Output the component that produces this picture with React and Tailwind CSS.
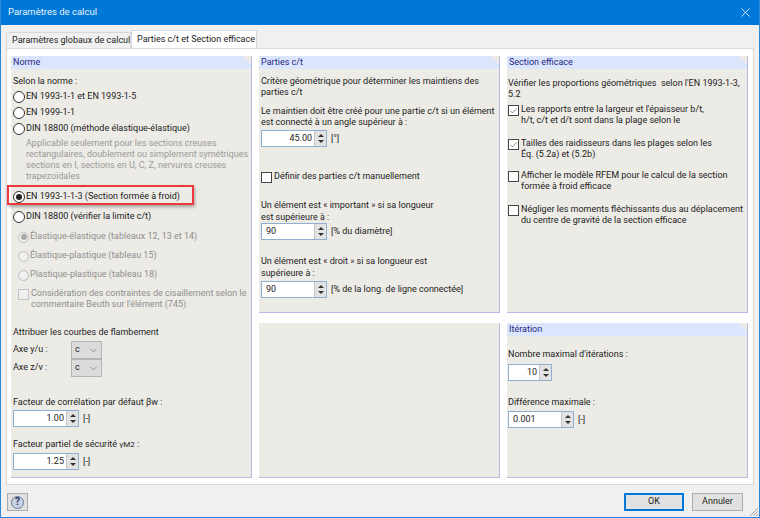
import { X, Check, ChevronDown } from 'lucide-react';

function Panel({ title, className = '', children }) {
  return (
    <div className={`relative bg-[#ecebe6] border-r border-b border-[#b9bbe6] ${className}`}>
      {title && (
        <div className="relative h-[13px] bg-[#dbe5fb] pl-[2px] text-[#25258a] leading-[13px] [clip-path:polygon(0_0,calc(100%-8px)_0,100%_8px,100%_100%,0_100%)]">
          {title}
        </div>
      )}
      {children}
    </div>
  );
}

function Radio({ label, checked, disabled, className = '' }) {
  return (
    <div className={`flex items-center h-[14px] ${disabled ? 'pl-[5px] text-[#8f8f8f]' : ''} ${className}`}>
      <span className={`flex items-center justify-center shrink-0 rounded-full border ${disabled ? 'w-[11px] h-[11px] bg-[#f0f0f0] border-[#bdbdbd]' : 'w-[12px] h-[12px] bg-white border-[#333333]'} mr-[1px]`}>
        {checked && <span className={`rounded-full w-[6px] h-[6px] ${disabled ? 'bg-[#a8a8a8]' : 'bg-[#222222]'}`} />}
      </span>
      <span className="whitespace-nowrap">{label}</span>
    </div>
  );
}

function CheckBox({ checked, disabled, lines, className = '' }) {
  return (
    <div className={`flex items-start ${className}`}>
      <span className={`flex items-center justify-center shrink-0 w-[11px] h-[11px] mt-[1px] mr-[2px] border ${disabled ? 'border-[#c4c4c4] bg-[#f0f0f0]' : 'border-[#444444] bg-white'}`}>
        {checked && <Check size={10} strokeWidth={1.5} className="text-[#333333]" />}
      </span>
      <div className={`leading-[11px] ${disabled ? 'text-[#8f8f8f]' : ''}`}>
        {lines.map((line) => (
          <div key={line} className="whitespace-nowrap">{line}</div>
        ))}
      </div>
    </div>
  );
}

function Spinner({ value, unit, width = 'w-[66px]', left, className = '' }) {
  return (
    <div className={`flex items-center h-[17px] ${className}`}>
      <div className={`flex h-full bg-white border border-[#8fb0d0] ${width}`}>
        <span className={`flex-1 leading-[15px] ${left ? 'pl-[4px] text-left' : 'pr-[2px] text-right'}`}>{value}</span>
        <span className="flex flex-col items-center justify-center gap-[3px] w-[12px] bg-[#e3e3e3] border-l border-[#c4c4c4]">
          <span className="w-0 h-0 border-x-[3px] border-x-transparent border-b-[3px] border-b-[#333333]" />
          <span className="w-0 h-0 border-x-[3px] border-x-transparent border-t-[3px] border-t-[#333333]" />
        </span>
      </div>
      {unit && <span className="ml-[4px] whitespace-nowrap">{unit}</span>}
    </div>
  );
}

function Select({ value }) {
  return (
    <div className="flex items-center justify-between w-[31px] h-[18px] bg-[#dcdcdc] border border-[#b4b4b4] pl-[3px] pr-[2px]">
      <span>{value}</span>
      <ChevronDown size={11} strokeWidth={1.25} className="text-[#555555]" />
    </div>
  );
}

export default function App() {
  return (
    <div className="w-[760px] h-[518px] flex flex-col overflow-hidden bg-[#f0f0f0] border-x border-b border-[#2b88d8] text-[9px] text-[#1c1c1c] font-['Roboto',sans-serif]">
      <div className="flex items-center justify-between h-[25px] -mx-px bg-[#0078d7] pl-[8px] pr-[7px] text-[9.5px] text-[#e6f1fb] shrink-0">
        <span>Paramètres de calcul</span>
        <X size={15} strokeWidth={1.25} className="text-white" />
      </div>

      <div className="flex items-end h-[23px] pl-[5px] shrink-0">
        <div className="flex items-center h-[16px] w-[125px] bg-[#f0f0f0] border border-b-0 border-[#d9d9d9] pl-[5px] whitespace-nowrap">
          Paramètres globaux de calcul
        </div>
        <div className="flex items-center h-[18px] w-[126px] bg-white border border-b-0 border-[#d9d9d9] pl-[5px] whitespace-nowrap">
          Parties c/t et Section efficace
        </div>
      </div>

      <div className="grid grid-cols-[241px_241px_241px] grid-rows-[257px_155px] gap-x-[7px] gap-y-[10px] h-[437px] mx-[5px] px-[4px] pt-[7px] bg-white border border-[#d9d9d9] shrink-0">
        <Panel title="Norme" className="row-span-2">
          <div className="px-[2px] pt-[5px]">
            <div className="h-[14px] leading-[14px]">Selon la norme :</div>
            <Radio label="EN 1993-1-1 et EN 1993-1-5" className="mt-[2px]" />
            <Radio label="EN 1999-1-1" className="mt-[2px]" />
            <Radio label="DIN 18800 (méthode élastique-élastique)" className="mt-[2px]" />
            <div className="pl-[13px] mt-[2px] leading-[11px] text-[#9a9a9a]">
              <div className="whitespace-nowrap">Applicable seulement pour les sections creuses</div>
              <div className="whitespace-nowrap">rectangulaires, doublement ou simplement symétriques</div>
              <div className="whitespace-nowrap">sections en I, sections en U, C, Z, nervures creuses</div>
              <div className="whitespace-nowrap">trapezoïdales</div>
            </div>
            <div className="relative mt-[8px]">
              <Radio label="EN 1993-1-1-3 (Section formée à froid)" checked />
              <div className="absolute -left-[6px] -top-[5px] w-[187px] h-[20px] border-2 border-[#f0393f] shadow-[1px_2px_3px_rgba(0,0,0,0.3)]" />
            </div>
            <Radio label="DIN 18800 (vérifier la limite c/t)" className="mt-[6px]" />
            <Radio label="Élastique-élastique (tableaux 12, 13 et 14)" checked disabled className="mt-[6px]" />
            <Radio label="Élastique-plastique (tableau 15)" disabled className="mt-[5px]" />
            <Radio label="Plastique-plastique (tableau 18)" disabled className="mt-[5px]" />
            <div className="pl-[5px] mt-[6px]">
              <CheckBox disabled lines={['Considération des contraintes de cisaillement selon le', "commentaire Beuth sur l'élément (745)"]} />
            </div>
            <div className="mt-[15px] h-[14px] leading-[14px]">Attribuer les courbes de flambement</div>
            <div className="flex items-center mt-[2px]">
              <span className="w-[58px]">Axe y/u :</span>
              <Select value="c" />
            </div>
            <div className="flex items-center">
              <span className="w-[58px]">Axe z/v :</span>
              <Select value="c" />
            </div>
            <div className="mt-[18px] h-[14px] leading-[14px]">Facteur de corrélation par défaut βw :</div>
            <Spinner value="1.00" unit="[-]" className="mt-[1px]" />
            <div className="mt-[10px] h-[14px] leading-[14px]">Facteur partiel de sécurité <span className="text-[8px]">γM2</span> :</div>
            <Spinner value="1.25" unit="[-]" className="mt-[2px]" />
          </div>
        </Panel>

        <Panel title="Parties c/t">
          <div className="px-[2px] pt-[7px] leading-[11px] whitespace-nowrap">
            <div>Critère géométrique pour déterminer les maintiens des</div>
            <div>parties c/t</div>
            <div className="mt-[8px]">Le maintien doit être créé pour une partie c/t si un élément</div>
            <div>est connecté à un angle supérieur à :</div>
            <Spinner value="45.00" unit="[°]" className="mt-[2px]" />
            <CheckBox lines={['Définir des parties c/t manuellement']} className="mt-[24px]" />
            <div className="mt-[17px]">Un élément est « important » si sa longueur</div>
            <div className="mt-[1px]">est supérieure à :</div>
            <Spinner value="90" unit="[% du diamètre]" left className="mt-0" />
            <div className="mt-[16px]">Un élément est « droit » si sa longueur est</div>
            <div className="mt-[1px]">supérieure à :</div>
            <Spinner value="90" unit="[% de la long. de ligne connectée]" left className="mt-[2px]" />
          </div>
        </Panel>

        <Panel title="Section efficace">
          <div className="px-[1px] pt-[9px] leading-[11px]">
            <div className="whitespace-nowrap">Vérifier les proportions géométriques&nbsp; selon l'EN 1993-1-3,</div>
            <div>5.2</div>
            <CheckBox checked lines={["Les rapports entre la largeur et l'épaisseur b/t,", 'h/t, c/t et d/t sont dans la plage selon le']} className="mt-[4px]" />
            <CheckBox checked lines={['Tailles des raidisseurs dans les plages selon les', 'Éq. (5.2a) et (5.2b)']} className="mt-[12px]" />
            <CheckBox lines={['Afficher le modèle RFEM pour le calcul de la section', 'formée à froid efficace']} className="mt-[10px]" />
            <CheckBox lines={['Négliger les moments fléchissants dus au déplacement', 'du centre de gravité de la section efficace']} className="mt-[12px]" />
          </div>
        </Panel>

        <Panel />

        <Panel title="Itération">
          <div className="px-[1px] pt-[11px]">
            <div className="h-[14px] leading-[14px]">Nombre maximal d'itérations :</div>
            <Spinner value="10" width="w-[44px]" className="mt-[3px]" />
            <div className="mt-[14px] h-[14px] leading-[14px]">Différence maximale :</div>
            <Spinner value="0.001" unit="[-]" left className="mt-[2px]" />
          </div>
        </Panel>
      </div>

      <div className="relative flex items-start justify-between flex-1 pt-[8px] pl-[6px] pr-[16px]">
        <div className="flex items-center justify-center w-[21px] h-[18px] bg-[#e1e1e1] border border-[#adadad]">
          <span className="flex items-center justify-center w-[13px] h-[13px] rounded-full bg-[#c9d3e6] border border-[#6b7a94] text-[10px] font-bold text-[#26365a] leading-none">?</span>
        </div>
        <div className="flex gap-[8px]">
          <div className="flex items-center justify-center w-[60px] h-[18px] bg-[#e1e1e1] border-2 border-[#0078d7]">OK</div>
          <div className="flex items-center justify-center w-[51px] h-[18px] bg-[#e1e1e1] border border-[#adadad]">Annuler</div>
        </div>
        <svg className="absolute right-0 bottom-0" width="11" height="11" viewBox="0 0 11 11">
          <path d="M10 2 L2 10 M10 5 L5 10 M10 8 L8 10" stroke="#a8a8a8" strokeWidth="1" />
        </svg>
      </div>
    </div>
  );
}
